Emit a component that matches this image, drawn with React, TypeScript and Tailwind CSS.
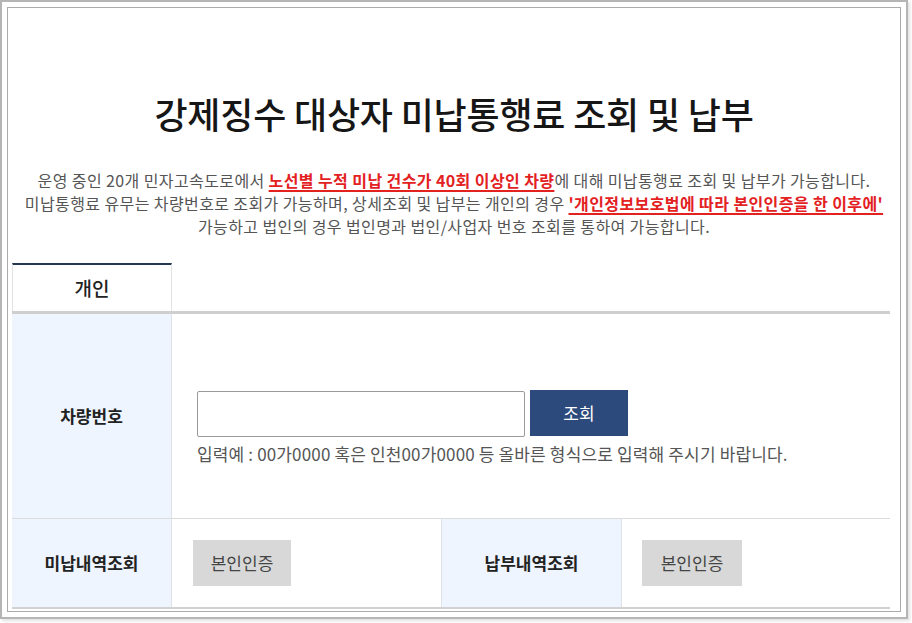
const font = { fontFamily: '"Noto Sans CJK KR", "Noto Sans", sans-serif' };

const Red = ({ children }: { children: React.ReactNode }) => (
  <span className="font-bold text-[#e3211f] underline underline-offset-[3px] decoration-[1.5px]">
    {children}
  </span>
);

export default function App() {
  return (
    <div className="w-[912px] h-[623px] bg-white" style={font}>
      <div className="w-[908px] h-[619px] border-2 border-[#b5b5b5] p-[5px] shadow-[2px_2px_3px_rgba(0,0,0,0.12)]">
        <div className="h-full border border-[#ababab] bg-white flex flex-col">
          <h1 className="pt-[85px] text-center text-[36px] leading-[40px] font-medium text-[#161616] tracking-[-0.2px]">
            강제징수 대상자 미납통행료 조회 및 납부
          </h1>

          <p className="mt-[36px] text-center text-[16px] leading-[23px] text-[#555] tracking-[0.4px] whitespace-nowrap">
            운영 중인 20개 민자고속도로에서 <Red>노선별 누적 미납 건수가 40회 이상인 차량</Red>에 대해 미납통행료 조회 및 납부가 가능합니다.
            <br />
            미납통행료 유무는 차량번호로 조회가 가능하며, 상세조회 및 납부는 개인의 경우 <Red>'개인정보보호법에 따라 본인인증을 한 이후에'</Red>
            <br />
            가능하고 법인의 경우 법인명과 법인/사업자 번호 조회를 통하여 가능합니다.
          </p>

          <div className="mt-[25px] ml-[4px] w-[878px]">
            {/* tabs */}
            <div className="flex border-b-[3px] border-[#cfcfcf]">
              <div className="w-[160px] h-[48px] border-t-2 border-t-[#263650] border-x border-x-[#e2e2e2] flex items-center justify-center text-[19px] font-medium text-[#222]">
                개인
              </div>
            </div>

            {/* row: 차량번호 */}
            <div className="flex h-[205px] border-b border-[#dcdcdc]">
              <div className="w-[160px] bg-[#eef5fe] border-r border-[#dfe3e8] flex items-center justify-center text-[17px] font-bold text-[#222]">
                차량번호
              </div>
              <div className="flex-1 pl-[25px] pt-[77px]">
                <div className="flex items-start gap-[5px]">
                  <input
                    className="w-[328px] h-[46px] border border-[#9a9a9a] rounded-[2px] outline-none px-3"
                    type="text"
                  />
                  <button className="w-[98px] h-[46px] -mt-px bg-[#2d4a7d] text-white text-[17px]">
                    조회
                  </button>
                </div>
                <p className="mt-[5px] text-[17px] leading-[24px] text-[#555] tracking-[0.15px]">
                  입력예 : 00가0000 혹은 인천00가0000 등 올바른 형식으로 입력해 주시기 바랍니다.
                </p>
              </div>
            </div>

            {/* row: 조회 */}
            <div className="grid grid-cols-[160px_269px_181px_1fr] h-[90px] border-b-2 border-[#d2d2d2]">
              <div className="bg-[#eef5fe] border-r border-[#dfe3e8] flex items-center justify-center text-[17px] font-bold text-[#222]">
                미납내역조회
              </div>
              <div className="flex items-center pl-[21px]">
                <button className="w-[98px] h-[46px] bg-[#d8d8d8] text-[17px] text-[#444]">
                  본인인증
                </button>
              </div>
              <div className="bg-[#eef5fe] border-x border-[#dfe3e8] flex items-center justify-center text-[17px] font-bold text-[#222]">
                납부내역조회
              </div>
              <div className="flex items-center pl-[20px]">
                <button className="w-[100px] h-[46px] bg-[#d8d8d8] text-[17px] text-[#444]">
                  본인인증
                </button>
              </div>
            </div>
          </div>
        </div>
      </div>
    </div>
  );
}
